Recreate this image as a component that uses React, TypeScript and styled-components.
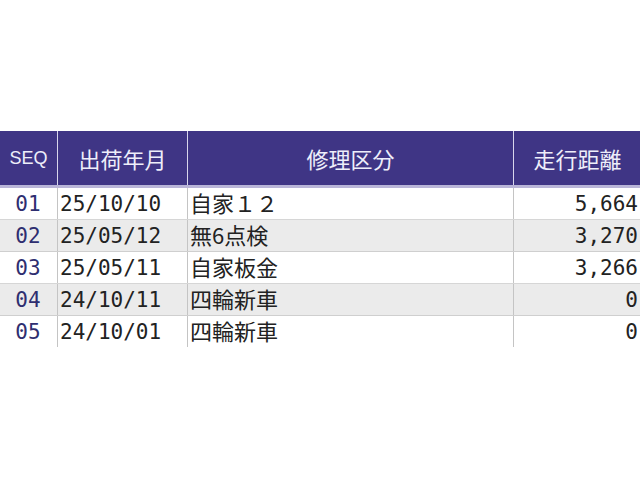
import React from 'react';
import styled, { createGlobalStyle } from 'styled-components';

const Global = createGlobalStyle`
  html, body {
    margin: 0;
    padding: 0;
    background: #ffffff;
    font-family: "Noto Sans CJK JP", "DejaVu Sans", sans-serif;
  }
`;

const Page = styled.div`
  width: 640px;
  height: 480px;
  padding-top: 131px;
  box-sizing: border-box;
`;

const Table = styled.table`
  width: 638px;
  border-collapse: collapse;
  table-layout: fixed;
`;

const Th = styled.th<{ $w: number; $small?: boolean }>`
  width: ${({ $w }) => $w}px;
  height: 54px;
  padding: 0;
  background: #3f3585;
  color: #eeeefa;
  font-weight: normal;
  font-size: ${({ $small }) => ($small ? '18px' : '22px')};
  font-family: ${({ $small }) =>
    $small ? '"Liberation Sans", sans-serif' : '"Noto Sans CJK JP", sans-serif'};
  text-align: center;
  border-left: 1px solid #d8d6ec;
  border-bottom: 3px solid #b9b5d8;
  &:first-child {
    border-left: none;
  }
`;

const Row = styled.tr<{ $alt: boolean }>`
  background: ${({ $alt }) => ($alt ? '#ebebeb' : '#ffffff')};
  & > td {
    border-bottom: 1px solid ${({ $alt }) => ($alt ? '#cfcfcf' : '#d6d6d6')};
  }
  &:last-child > td {
    border-bottom: none;
  }
`;

const Td = styled.td<{ $align: 'left' | 'center' | 'right'; $navy?: boolean; $jp?: boolean }>`
  height: ${({ $jp }) => ($jp ? '28px' : '31px')};
  padding: ${({ $jp }) => ($jp ? '0 3px 3px 2px' : '0 3px 0 2px')};
  font-family: ${({ $jp }) =>
    $jp ? '"Noto Sans CJK JP", sans-serif' : '"DejaVu Sans Mono", "Noto Sans CJK JP", monospace'};
  font-size: ${({ $jp }) => ($jp ? '22px' : '21px')};
  line-height: 22px;
  color: ${({ $navy }) => ($navy ? '#2e2e70' : '#222222')};
  text-align: ${({ $align }) => $align};
  border-left: 1px solid #c4c4c4;
  white-space: nowrap;
  &:first-child {
    border-left: none;
  }
`;

const rows = [
  { seq: '01', date: '25/10/10', kind: '自家１２', km: '5,664' },
  { seq: '02', date: '25/05/12', kind: '無6点検', km: '3,270' },
  { seq: '03', date: '25/05/11', kind: '自家板金', km: '3,266' },
  { seq: '04', date: '24/10/11', kind: '四輪新車', km: '0' },
  { seq: '05', date: '24/10/01', kind: '四輪新車', km: '0' },
];

const App = () => {
  return (
    <>
      <Global />
      <Page>
        <Table>
          <thead>
            <tr>
              <Th $w={57} $small>SEQ</Th>
              <Th $w={129}>出荷年月</Th>
              <Th $w={325}>修理区分</Th>
              <Th $w={127}>走行距離</Th>
            </tr>
          </thead>
          <tbody>
            {rows.map((r, i) => (
              <Row key={r.seq} $alt={i % 2 === 1}>
                <Td $align="center" $navy>{r.seq}</Td>
                <Td $align="left">{r.date}</Td>
                <Td $align="left" $jp>{r.kind}</Td>
                <Td $align="right">{r.km}</Td>
              </Row>
            ))}
          </tbody>
        </Table>
      </Page>
    </>
  );
};

export default App;
